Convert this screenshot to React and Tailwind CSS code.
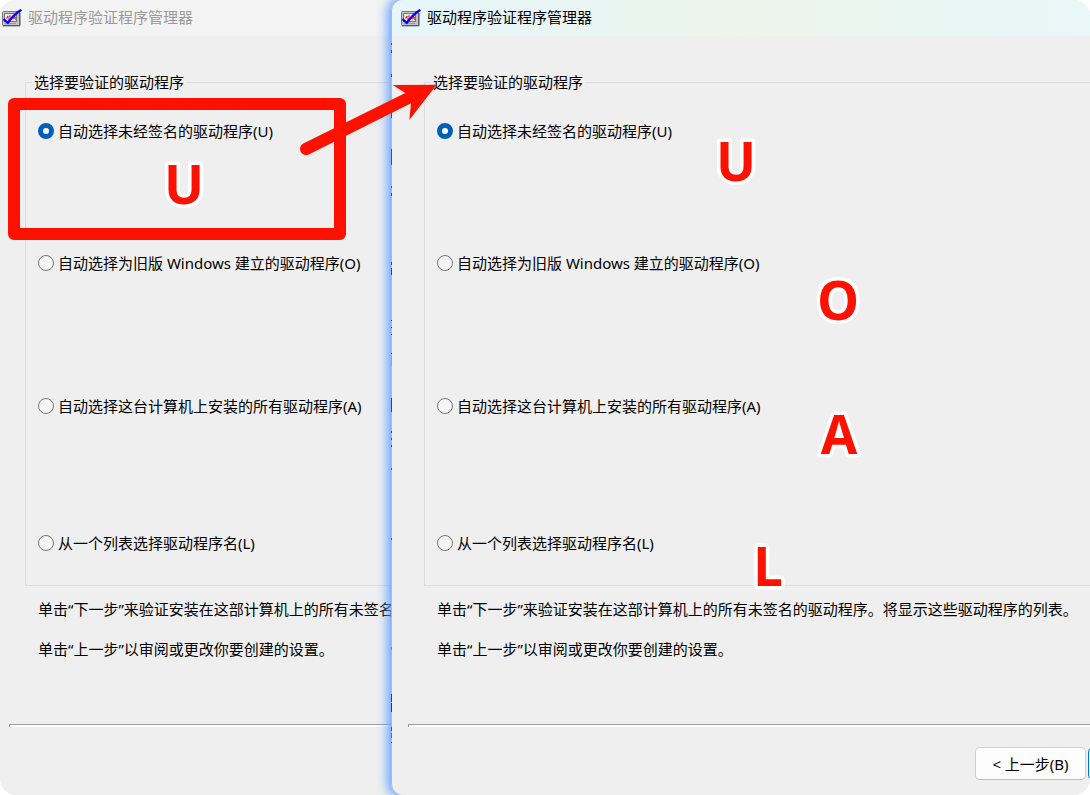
import React, { useId, useState } from 'react';
import clsx from 'clsx';

const options = [
  { id: 'U', label: '自动选择未经签名的驱动程序(U)', height: 'h-[132px]' },
  { id: 'O', label: '自动选择为旧版 Windows 建立的驱动程序(O)', height: 'h-[143px]' },
  { id: 'A', label: '自动选择这台计算机上安装的所有驱动程序(A)', height: 'h-[137px]' },
  { id: 'L', label: '从一个列表选择驱动程序名(L)', height: 'h-[54px]' },
];

const keyMarks = [
  { letter: 'U', place: 'left-[156px] top-[157px]' },
  { letter: 'U', place: 'left-[708px] top-[134px]' },
  { letter: 'O', place: 'left-[810px] top-[273px]' },
  { letter: 'A', place: 'left-[811px] top-[407px]' },
  { letter: 'L', place: 'left-[740px] top-[539px]' },
];

// slivers of the text behind that show along the edge of the front window: [y, height, colour]
const slivers = [
  [43, 2, '#5b4d4d'], [50, 3, '#444c66'], [74, 3, '#444c66'], [113, 5, '#3d4a75'],
  [149, 8, '#37558c'], [157, 8, '#5c4a66'], [186, 2, '#555'], [193, 3, '#444c66'],
  [262, 3, '#444c66'], [268, 7, '#3a4468'], [320, 1, '#333'], [327, 1, '#333'],
  [334, 1, '#333'], [353, 1, '#333'], [356, 10, '#b0a08c'], [398, 14, '#2f4585'],
  [431, 2, '#444c66'], [438, 2, '#444c66'], [445, 2, '#444c66'], [468, 2, '#7a4d4d'],
  [538, 2, '#7a4d4d'], [647, 3, '#b08060'], [694, 8, '#37446c'], [703, 9, '#2d3a66'],
  [727, 4, '#5c4a66'], [733, 5, '#8a6a50'], [742, 1, '#333'],
];

function AppIcon() {
  return (
    <svg className="mt-[2px] h-[18px] w-5 shrink-0" viewBox="0 0 20 18" aria-hidden="true">
      <rect x="0.5" y="2.5" width="17" height="14" rx="1" fill="#c4c4c4" stroke="#777" />
      <path d="M1 16.8h17V4" fill="none" stroke="#4c4c4c" strokeWidth="1" />
      <rect x="2.5" y="4.5" width="12" height="8" fill="#e6e6ea" stroke="#777" />
      <path d="M4 9h1.5V7M7 12V7h2M9 8v3M11 10l3-2M12 7l2 4" fill="none" stroke="#f02030" strokeWidth="1" />
      <path d="M3 14.5h11" stroke="#9a9a9a" strokeWidth="1" />
      <path d="M1.5 10.2 5.8 13.8C9 9.5 13.5 4.5 19.4 0.8" fill="none" stroke="#0a00ff" strokeWidth="2.4" />
    </svg>
  );
}

function VerifierWindow({ className, titleClass, inset }) {
  const group = useId();
  const [selected, setSelected] = useState('U');

  return (
    <section className={clsx('overflow-hidden bg-[#efefef]', className)}>
      <header className={clsx('h-9', titleClass)}>
        <div className={clsx('flex h-[34px] items-center', inset)}>
          <div className="flex items-center gap-[6px] pl-[2px]">
            <AppIcon />
            <h1 className="leading-6">驱动程序验证程序管理器</h1>
          </div>
        </div>
      </header>

      <div className={clsx('pt-[34px]', inset)}>
        <fieldset className="ml-[25px] min-w-0 border border-r-0 border-[#dcdcdc] pl-3">
          <legend className="-ml-[6px] px-[2px] leading-6">选择要验证的驱动程序</legend>
          <div className="pt-[25px]">
            {options.map((option) => (
              <div key={option.id} className={option.height}>
                <label className="inline-flex h-6 items-center gap-1">
                  <input
                    type="radio"
                    name={group}
                    checked={selected === option.id}
                    onChange={() => setSelected(option.id)}
                    className="h-4 w-4 shrink-0 appearance-none rounded-full border border-[#757575] bg-[#f5f5f5] checked:border-5 checked:border-[#005fb8] checked:bg-white"
                  />
                  <span>{option.label}</span>
                </label>
              </div>
            ))}
          </div>
        </fieldset>

        <div className="ml-[38px] mt-[11px] flex flex-col gap-4 leading-6">
          <p>单击“下一步”来验证安装在这部计算机上的所有未签名的驱动程序。将显示这些驱动程序的列表。</p>
          <p>单击“上一步”以审阅或更改你要创建的设置。</p>
        </div>

        <hr className="ml-[9px] mt-[63px] h-[3px] border-0 border-l border-t border-[#a0a0a0] bg-white" />
      </div>
    </section>
  );
}

function WizardButtons() {
  return (
    <div className="absolute bottom-[15px] right-0 flex gap-[2px] overflow-hidden">
      <button className="h-[33px] w-[111px] rounded-[5px] border border-[#d0d0d0] border-b-[#bcbcbc] bg-[#fdfdfd] leading-6">
        &lt; 上一步(B)
      </button>
      <button
        aria-label="下一步"
        className="-mr-[109px] h-[33px] w-[111px] rounded-[5px] border border-[#0078d4] bg-[#e0eef9]"
      ></button>
    </div>
  );
}

function KeyMark({ letter, place }) {
  return (
    <svg className={clsx('pointer-events-none absolute h-14 w-14 overflow-visible', place)} viewBox="0 0 56 56">
      <text
        x="28"
        y="47"
        textAnchor="middle"
        fill="#ff1100"
        stroke="#fff"
        strokeWidth="7"
        strokeLinejoin="round"
        paintOrder="stroke"
        className="font-['Open_Sans',sans-serif] text-[53px] font-bold"
      >
        {letter}
      </text>
    </svg>
  );
}

function App() {
  return (
    <div className="bg-white">
      <main className="relative flex min-h-screen overflow-hidden whitespace-nowrap rounded-2xl bg-white font-['Noto_Sans','Noto_Sans_CJK_SC',sans-serif] text-[15px] text-black">
        <VerifierWindow className="w-[411px] shrink-0" titleClass="bg-[#f3f3f3] text-[#999]" inset="pl-0" />

        <div className="relative -ml-5 flex min-w-0 flex-1 rounded-xl shadow-[0_0_12px_3px_#5a9cff]">
          <VerifierWindow
            className="min-w-0 flex-1 rounded-xl border-l border-[#b4b8c0]"
            titleClass="bg-linear-to-r from-[#e6f6fb] via-[#ecf5ec] to-[#e8f7f8]"
            inset="pl-[7px]"
          />
          <WizardButtons />
          <svg className="absolute left-0 top-0 h-[795px] w-px" viewBox="0 0 1 795" aria-hidden="true">
            {slivers.map(([y, height, fill]) => (
              <rect key={y} y={y} width="1" height={height} fill={fill} />
            ))}
          </svg>
        </div>

        {/* hand-made marks over both windows */}
        <div className="pointer-events-none absolute left-2 top-[98px] h-[142px] w-[338px] rounded-md border-12 border-[#ff1100]"></div>
        <svg
          className="pointer-events-none absolute left-[296px] top-20 h-20 w-[146px]"
          viewBox="296 80 146 80"
          aria-hidden="true"
        >
          <path
            d="M303.3 143.6 405.3 93 392.7 85 436.7 84.7 409.3 120 411 103.3 308.7 154.4A6 6 0 0 1 303.3 143.6Z"
            fill="#ff1100"
          />
        </svg>
        {keyMarks.map((mark) => (
          <KeyMark key={mark.place} letter={mark.letter} place={mark.place} />
        ))}
      </main>
    </div>
  );
}

export default App;
